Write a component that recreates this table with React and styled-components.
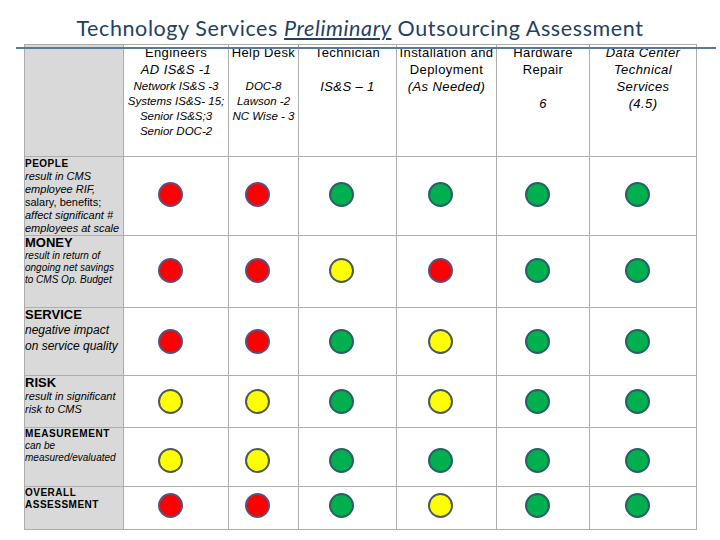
import React from "react";
import styled, { createGlobalStyle } from "styled-components";

const GlobalStyle = createGlobalStyle`
	html, body {
		margin: 0;
		padding: 0;
		background: #ffffff;
	}
	body {
		font-family: "Liberation Sans", Arial, sans-serif;
		color: #000;
	}
`

const Slide = styled.div`
	position: relative;
	width: 720px;
	height: 540px;
	overflow: hidden;
	background: #fff;
`

const TitleBar = styled.div`
	height: 44px;
	box-sizing: border-box;
	padding-top: 15px;
	text-align: center;
`

const Title = styled.h1`
	margin: 0;
	font-family: Lato, "Open Sans", sans-serif;
	font-weight: 400;
	font-size: 21.5px;
	line-height: 26px;
	letter-spacing: 0.6px;
	color: #243f60;
	white-space: nowrap;
`

const Em = styled.span`
	font-style: italic;
	text-decoration: underline;
	text-decoration-thickness: 2px;
	text-underline-offset: 2px;
`

// the blue rule of the slide template runs over the table top
const Rule = styled.div`
	position: absolute;
	left: 16px;
	top: 47px;
	width: 700px;
	height: 2px;
	background: #5b7899;
`

const Table = styled.div`
	display: grid;
	grid-template-columns: 98px 104px 69px 97px 99px 92px 106px;
	grid-template-rows: 111px 78px 71px 67px 51px 58px 42px;
	gap: 1px;
	width: max-content;
	margin-left: 24px;
	border: 1px solid #adadad;
	background: #adadad;
`

const Corner = styled.div`
	background: #d9d9d9;
`

const HeaderCell = styled.div`
	background: #fff;
	overflow: hidden;
	text-align: center;
`

const HeaderStack = styled.div`
	margin-top: -1px;
`

const HeaderLine = styled.div`
	font-size: ${(p) => p.$size || 13}px;
	line-height: ${(p) => p.$lh || 17}px;
	font-style: ${(p) => (p.$italic ? "italic" : "normal")};
	letter-spacing: ${(p) => (p.$small ? "0" : "0.4px")};
	margin-top: ${(p) => p.$gap || 0}px;
	white-space: nowrap;
`

const LabelCell = styled.div`
	background: #d9d9d9;
	overflow: hidden;
`

const LabelTitle = styled.div`
	font-weight: 700;
	font-size: ${(p) => p.$size}px;
	line-height: ${(p) => p.$lh}px;
	letter-spacing: ${(p) => p.$spacing || 0}px;
	white-space: nowrap;
`

const LabelText = styled.div`
	font-size: ${(p) => p.$size}px;
	line-height: ${(p) => p.$lh}px;
	font-style: ${(p) => (p.$upright ? "normal" : "italic")};
	white-space: nowrap;
`

const DotCell = styled.div`
	background: #fff;
	display: flex;
	align-items: center;
	justify-content: center;
	padding-right: 12px;
	padding-top: ${(p) => (p.$offset > 0 ? p.$offset * 2 : 0)}px;
	padding-bottom: ${(p) => (p.$offset < 0 ? -p.$offset * 2 : 0)}px;
`

const dotColors = {
	r: { fill: "#ff0000", edge: "#5a4f7f" },
	y: { fill: "#ffff00", edge: "#4a5a5a" },
	g: { fill: "#00b04f", edge: "#2d5d6a" },
}

const Dot = styled.div`
	width: 21px;
	height: 21px;
	border-radius: 50%;
	background: ${(p) => dotColors[p.$c].fill};
	border: 2px solid ${(p) => dotColors[p.$c].edge};
	flex: none;
`

const columns = [
	[
		{ t: "Engineers" },
		{ t: "AD IS&S -1", italic: true },
		{ t: "Network IS&S -3", italic: true, small: true, gap: 1 },
		{ t: "Systems IS&S- 15;", italic: true, small: true },
		{ t: "Senior IS&S;3", italic: true, small: true },
		{ t: "Senior  DOC-2", italic: true, small: true },
	],
	[
		{ t: "Help Desk" },
		{ t: "\u00a0" },
		{ t: "DOC-8", italic: true, small: true, gap: 1 },
		{ t: "Lawson -2", italic: true, small: true },
		{ t: "NC Wise - 3", italic: true, small: true },
	],
	[
		{ t: "Technician" },
		{ t: "\u00a0" },
		{ t: "IS&S \u2013 1", italic: true },
	],
	[
		{ t: "Installation and" },
		{ t: "Deployment" },
		{ t: "(As Needed)", italic: true },
	],
	[
		{ t: "Hardware" },
		{ t: "Repair" },
		{ t: "\u00a0" },
		{ t: "6", italic: true },
	],
	[
		{ t: "Data Center", italic: true },
		{ t: "Technical", italic: true },
		{ t: "Services", italic: true },
		{ t: "(4.5)", italic: true },
	],
]

const rows = [
	{
		title: "PEOPLE", size: 10, lh: 13, spacing: 0.5,
		desc: [
			{ t: "result in CMS" },
			{ t: "employee RIF," },
			{ t: "salary, benefits;", upright: true },
			{ t: "affect significant #" },
			{ t: "employees at scale" },
		],
		descSize: 11, descLh: 13,
		dots: ["r", "r", "g", "g", "g", "g"], offset: -2,
	},
	{
		title: "MONEY", size: 13, lh: 14,
		desc: [
			{ t: "result in return of" },
			{ t: "ongoing net savings" },
			{ t: "to CMS Op. Budget" },
		],
		descSize: 10, descLh: 12,
		dots: ["r", "r", "y", "r", "g", "g"], offset: -1,
	},
	{
		title: "SERVICE", size: 13, lh: 14,
		desc: [
			{ t: "negative impact" },
			{ t: "on service quality" },
		],
		descSize: 12, descLh: 16,
		dots: ["r", "r", "g", "y", "g", "g"], offset: 0,
	},
	{
		title: "RISK", size: 13, lh: 14,
		desc: [
			{ t: "result in significant" },
			{ t: "risk to CMS" },
		],
		descSize: 11, descLh: 13,
		dots: ["y", "y", "g", "y", "g", "g"], offset: 0,
	},
	{
		title: "MEASUREMENT", size: 10, lh: 12, spacing: 0.6,
		desc: [
			{ t: "can be" },
			{ t: "measured/evaluated" },
		],
		descSize: 10, descLh: 12,
		dots: ["y", "y", "g", "g", "g", "g"], offset: 3,
	},
	{
		title: "OVERALL", size: 10, lh: 12, spacing: 0.5,
		second: "ASSESSMENT",
		desc: [],
		descSize: 10, descLh: 12,
		dots: ["r", "r", "g", "y", "g", "g"], offset: -3,
	},
]

export default function App() {
	return (
		<Slide>
			<GlobalStyle />
			<TitleBar>
				<Title>
					Technology Services <Em>Preliminary</Em> Outsourcing Assessment
				</Title>
			</TitleBar>
			<Table>
				<Corner />
				{columns.map((lines, i) => (
					<HeaderCell key={i}>
						<HeaderStack>
							{lines.map((l, j) => (
								<HeaderLine
									key={j}
									$italic={l.italic}
									$small={l.small}
									$size={l.small ? 11.5 : 13}
									$lh={l.small ? 15 : 17}
									$gap={l.gap}
								>
									{l.t}
								</HeaderLine>
							))}
						</HeaderStack>
					</HeaderCell>
				))}
				{rows.map((row) => (
					<React.Fragment key={row.title}>
						<LabelCell>
							<LabelTitle $size={row.size} $lh={row.lh} $spacing={row.spacing}>
								{row.title}
							</LabelTitle>
							{row.second && (
								<LabelTitle $size={row.size} $lh={row.lh} $spacing={row.spacing}>
									{row.second}
								</LabelTitle>
							)}
							{row.desc.map((d) => (
								<LabelText key={d.t} $size={row.descSize} $lh={row.descLh} $upright={d.upright}>
									{d.t}
								</LabelText>
							))}
						</LabelCell>
						{row.dots.map((c, k) => (
							<DotCell key={k} $offset={row.offset}>
								<Dot $c={c} />
							</DotCell>
						))}
					</React.Fragment>
				))}
			</Table>
			<Rule />
		</Slide>
	)
}
